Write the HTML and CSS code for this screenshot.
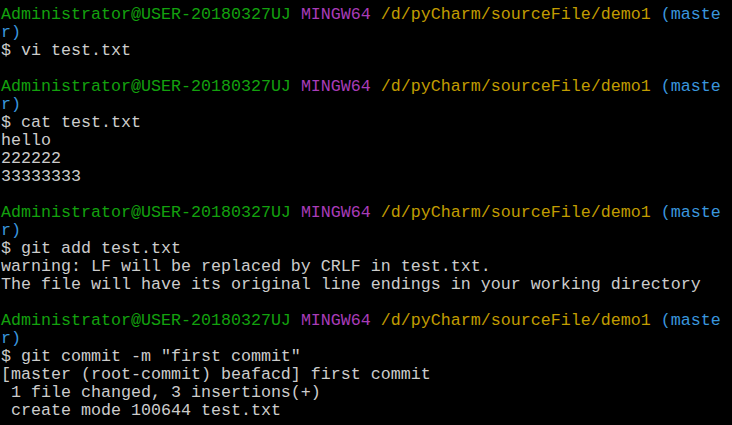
FILE: index.html
```html
<!DOCTYPE html>
<html>
<head>
<meta charset="utf-8">
<link rel="stylesheet" href="styles.css">
</head>
<body>
<div class="term">
<div class="line"><span class="g">Administrator@USER-20180327UJ</span> <span class="m">MINGW64</span> <span class="y">/d/pyCharm/sourceFile/demo1</span> <span class="b">(maste</span></div>
<div class="line"><span class="b">r)</span></div>
<div class="line">$ vi test.txt</div>
<div class="line"> </div>
<div class="line"><span class="g">Administrator@USER-20180327UJ</span> <span class="m">MINGW64</span> <span class="y">/d/pyCharm/sourceFile/demo1</span> <span class="b">(maste</span></div>
<div class="line"><span class="b">r)</span></div>
<div class="line">$ cat test.txt</div>
<div class="line">hello</div>
<div class="line">222222</div>
<div class="line">33333333</div>
<div class="line"> </div>
<div class="line"><span class="g">Administrator@USER-20180327UJ</span> <span class="m">MINGW64</span> <span class="y">/d/pyCharm/sourceFile/demo1</span> <span class="b">(maste</span></div>
<div class="line"><span class="b">r)</span></div>
<div class="line">$ git add test.txt</div>
<div class="line">warning: LF will be replaced by CRLF in test.txt.</div>
<div class="line">The file will have its original line endings in your working directory</div>
<div class="line"> </div>
<div class="line"><span class="g">Administrator@USER-20180327UJ</span> <span class="m">MINGW64</span> <span class="y">/d/pyCharm/sourceFile/demo1</span> <span class="b">(maste</span></div>
<div class="line"><span class="b">r)</span></div>
<div class="line">$ git commit -m "first commit"</div>
<div class="line">[master (root-commit) beafacd] first commit</div>
<div class="line"> 1 file changed, 3 insertions(+)</div>
<div class="line"> create mode 100644 test.txt</div>
</div>
</body>
</html>
```
FILE: styles.css
```css
html, body {
  margin: 0;
  padding: 0;
  background: #000;
  height: 100%;
  overflow: hidden;
}
.term {
  padding: 6px 0 0 1px;
  font-family: "Liberation Mono", monospace;
  font-size: 16.667px;
  line-height: 18px;
  color: #cccccc;
}
.line {
  height: 18px;
  white-space: pre;
}
.g { color: #13a10e; }
.m { color: #a83cb8; }
.y { color: #c19c00; }
.b { color: #3a96dd; }
```
